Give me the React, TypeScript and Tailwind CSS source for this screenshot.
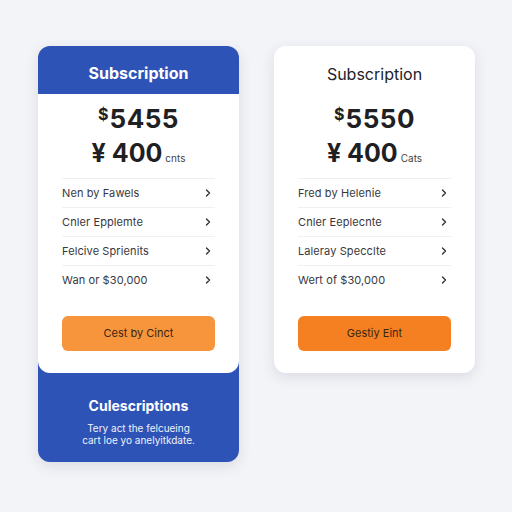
import React from "react";

const Chevron = () => (
  <svg width="10" height="10" viewBox="0 0 10 10" fill="none">
    <path d="M3.5 2 L6.5 5 L3.5 8" stroke="#333" strokeWidth="1.4" strokeLinecap="round" strokeLinejoin="round" />
  </svg>
);

type BodyProps = {
  price: string;
  unit: string;
  rows: string[];
  button: string;
  buttonClass: string;
};

const Body = ({ price, unit, rows, button, buttonClass }: BodyProps) => (
  <div className="flex flex-col px-[24px] pt-[10px] pb-[22px]">
    <div className="flex items-start justify-center h-[30px] text-[#1f1f24]">
      <span className="text-[16px] font-bold leading-[20px] mr-[1px]">$</span>
      <span className="text-[26px] font-bold leading-[30px] tracking-[0.5px]">{price}</span>
    </div>
    <div className="flex items-end justify-center h-[30px] mt-[4px] text-[#1f1f24]">
      <span className="text-[25px] font-bold leading-[30px]">¥ 400</span>
      <span className="text-[10px] leading-[14px] ml-[3px] mb-[3px] text-[#444]">{unit}</span>
    </div>
    <div className="mt-[10px] flex flex-col">
      {rows.map((r) => (
        <div key={r} className="flex items-center justify-between h-[29px] border-t border-[#f0f0f3] pr-[2px]">
          <span className="text-[11px] text-[#38383e] tracking-[0.1px]">{r}</span>
          <Chevron />
        </div>
      ))}
    </div>
    <button className={`mt-[22px] h-[35px] rounded-[6px] text-[11px] text-[#3a2614] ${buttonClass}`}>
      {button}
    </button>
  </div>
);

export default function App() {
  return (
    <div
      className="w-[512px] h-[512px] bg-[#f3f4f7] flex items-start pt-[46px] pl-[38px] gap-[35px]"
      style={{ fontFamily: "Inter, 'Open Sans', sans-serif" }}
    >
      <div className="w-[201px] rounded-[12px] bg-[#2e53b6] overflow-hidden shadow-[0_4px_14px_rgba(40,50,90,0.12)] flex flex-col">
        <div className="h-[48px] flex items-center justify-center pt-[6px]">
          <span className="text-white text-[16px] font-bold">Subscription</span>
        </div>
        <div className="bg-white rounded-b-[12px]">
          <Body
            price="5455"
            unit="cnts"
            rows={["Nen by Fawels", "Cnler Epplemte", "Felcive Sprienits", "Wan or $30,000"]}
            button="Cest by Cinct"
            buttonClass="bg-[#f7953c]"
          />
        </div>
        <div className="h-[89px] flex flex-col items-center pt-[23px] text-white">
          <span className="text-[14px] font-bold leading-[20px]">Culescriptions</span>
          <span className="text-[10px] leading-[12px] mt-[6px] text-center text-[#eef1fb]">
            Tery act the felcueing
            <br />
            cart loe yo anelyitkdate.
          </span>
        </div>
      </div>

      <div className="w-[201px] rounded-[12px] bg-white shadow-[0_4px_14px_rgba(40,50,90,0.12)] flex flex-col">
        <div className="h-[48px] flex items-center justify-center pt-[8px]">
          <span className="text-[#222228] text-[16px] font-normal">Subscription</span>
        </div>
        <Body
          price="5550"
          unit="Cats"
          rows={["Fred by Helenie", "Cnler Eeplecnte", "Laleray Specclte", "Wert of $30,000"]}
          button="Gestiy Eint"
          buttonClass="bg-[#f58022]"
        />
      </div>
    </div>
  );
}
